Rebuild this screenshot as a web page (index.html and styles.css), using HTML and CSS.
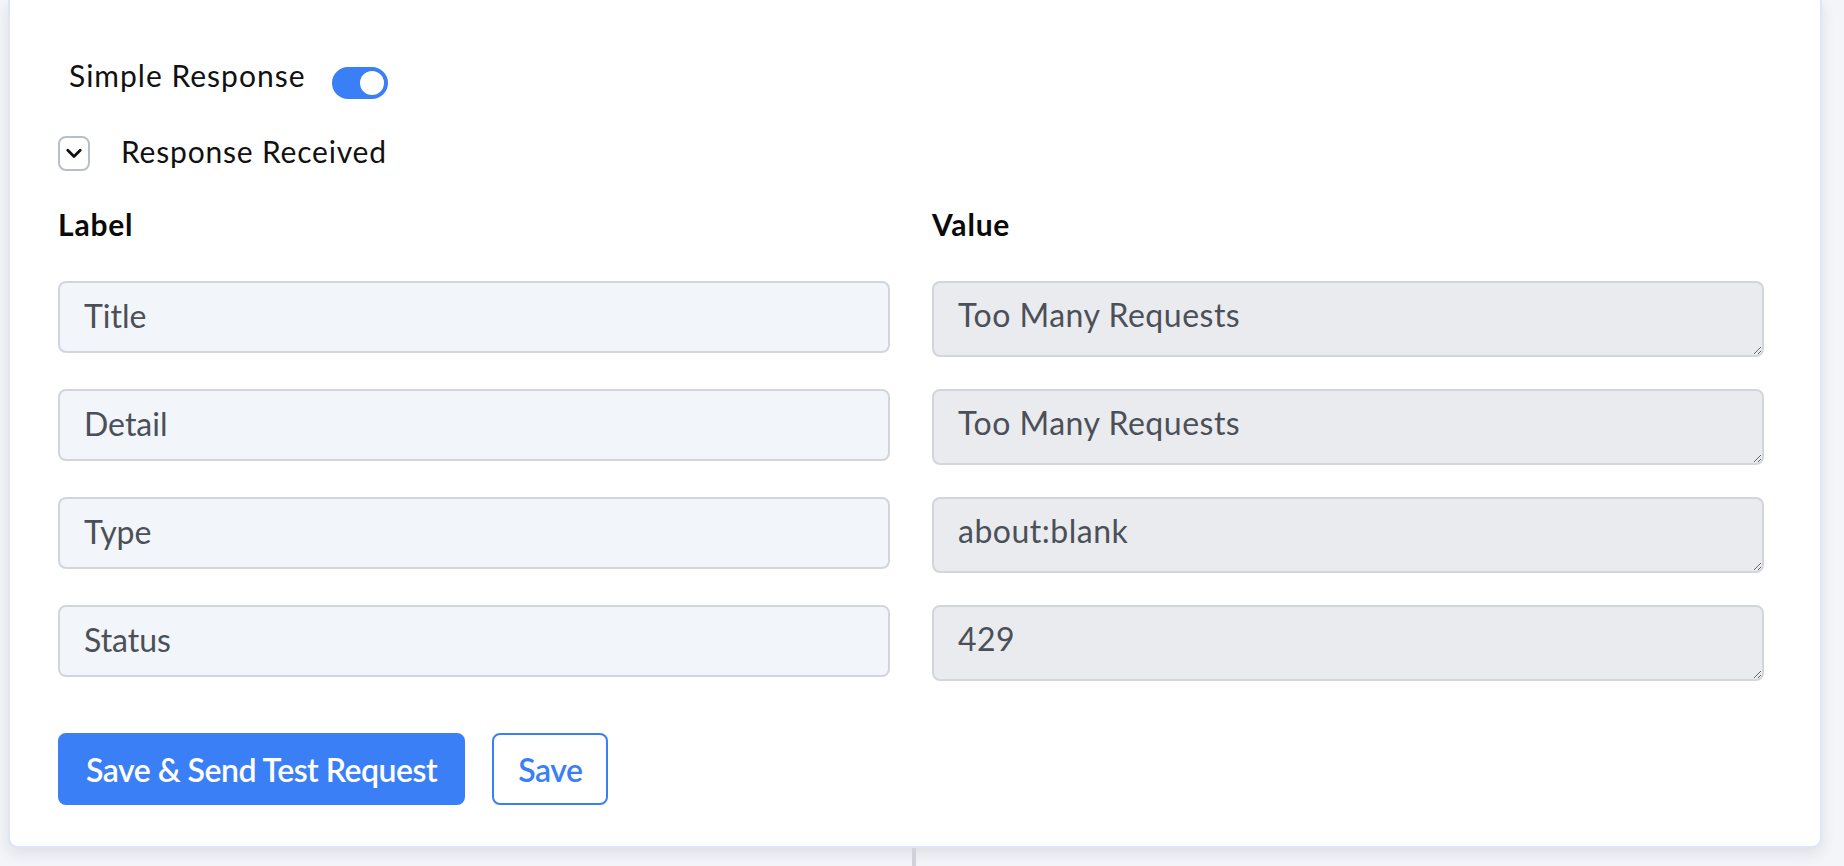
FILE: index.html
```html
<!DOCTYPE html>
<html lang="en">
<head>
<meta charset="utf-8">
<title>Simple Response</title>
<link rel="stylesheet" href="styles.css">
</head>
<body>
<div class="page">
  <div class="card">
    <div class="simple-row">
      <span class="simple-label">Simple Response</span>
      <span class="toggle" role="switch" aria-checked="true"><span class="knob"></span></span>
    </div>
    <div class="collapse-row">
      <span class="chev-box">
        <svg width="16" height="11" viewBox="0 0 16 11" aria-hidden="true"><path d="M1.8 2.3 L8 8.4 L14.2 2.3" fill="none" stroke="#111" stroke-width="2.8" stroke-linecap="round" stroke-linejoin="round"/></svg>
      </span>
      <span class="collapse-title">Response Received</span>
    </div>
    <div class="grid">
      <div class="head">Label</div>
      <div class="head">Value</div>
      <input class="field" type="text" value="Title" readonly>
      <textarea class="value" readonly>Too Many Requests</textarea>
      <input class="field" type="text" value="Detail" readonly>
      <textarea class="value" readonly>Too Many Requests</textarea>
      <input class="field" type="text" value="Type" readonly>
      <textarea class="value" readonly>about:blank</textarea>
      <input class="field" type="text" value="Status" readonly>
      <textarea class="value" readonly>429</textarea>
    </div>
    <div class="actions">
      <button class="btn btn-primary" type="button">Save &amp; Send Test Request</button>
      <button class="btn btn-outline" type="button">Save</button>
    </div>
  </div>
  <div class="below"><div class="below-line"></div></div>
</div>
</body>
</html>
```
FILE: styles.css
```css
* { box-sizing: border-box; }

html, body {
  margin: 0;
  padding: 0;
  background: #f3f5f8;
  overflow: hidden;
}

body {
  font-family: "Lato", "Open Sans", sans-serif;
  color: #111;
  height: 866px;
}

.page {
  padding: 0 22px 0 8px;
}

.card {
  background: #fff;
  border: 2px solid #dfe5f9;
  border-top: none;
  border-radius: 0 0 10px 10px;
  box-shadow: 0 6px 14px rgba(30, 40, 60, 0.10);
  padding: 55px 56px 41px 48px;
}

.simple-row {
  display: flex;
  align-items: flex-start;
  padding-left: 11px;
  gap: 27px;
}

.simple-label {
  font-size: 30px;
  line-height: 40px;
  letter-spacing: 1px;
}

.toggle {
  margin-top: 12px;
  width: 56px;
  height: 32px;
  border-radius: 16px;
  background: #3b7ff6;
  display: flex;
  align-items: center;
  justify-content: flex-end;
  padding: 0 4px;
}

.knob {
  width: 24px;
  height: 24px;
  border-radius: 50%;
  background: #fff;
}

.collapse-row {
  display: flex;
  align-items: flex-start;
  margin-top: 32px;
  gap: 31px;
}

.chev-box {
  margin-top: 5px;
  width: 32px;
  height: 35px;
  border: 2px solid #b9bfc9;
  border-radius: 8px;
  display: flex;
  align-items: center;
  justify-content: center;
}

.collapse-title {
  font-size: 30px;
  line-height: 40px;
  letter-spacing: 0.8px;
}

.grid {
  margin-top: 33px;
  display: grid;
  grid-template-columns: 1fr 1fr;
  column-gap: 42px;
  row-gap: 32px;
  align-items: start;
}

.head {
  font-size: 30px;
  line-height: 40px;
  font-weight: 700;
  letter-spacing: 0.8px;
  color: #0a0a0a;
  margin-bottom: 5px;
}

.field,
.value {
  font-family: inherit;
  font-size: 32px;
  color: #4b5058;
  border: 2px solid #d2d6dc;
  border-radius: 8px;
  padding: 0 24px;
  width: 100%;
  outline: none;
}

.field {
  height: 72px;
  background: #f2f5f9;
  padding-bottom: 4px;
}

.value {
  height: 76px;
  background: #e9ebef;
  padding-top: 12px;
  line-height: 40px;
  letter-spacing: 0.5px;
  resize: vertical;
  overflow: hidden;
  display: block;
}

.actions {
  display: flex;
  gap: 27px;
  margin-top: 52px;
}

.btn {
  font-family: inherit;
  font-size: 32px;
  font-weight: 600;
  letter-spacing: -0.5px;
  height: 72px;
  border-radius: 8px;
  padding: 0 26px;
  cursor: pointer;
}

.btn-primary {
  background: #3b7ff6;
  color: #fff;
  border: 2px solid #3b7ff6;
}

.btn-outline {
  background: #fff;
  color: #3b7ff6;
  border: 2px solid #3b7ff6;
  padding: 0 24px;
}

.below {
  height: 20px;
}

.below-line {
  margin-left: 904px;
  width: 4px;
  height: 20px;
  background: #d0d4da;
}
```
